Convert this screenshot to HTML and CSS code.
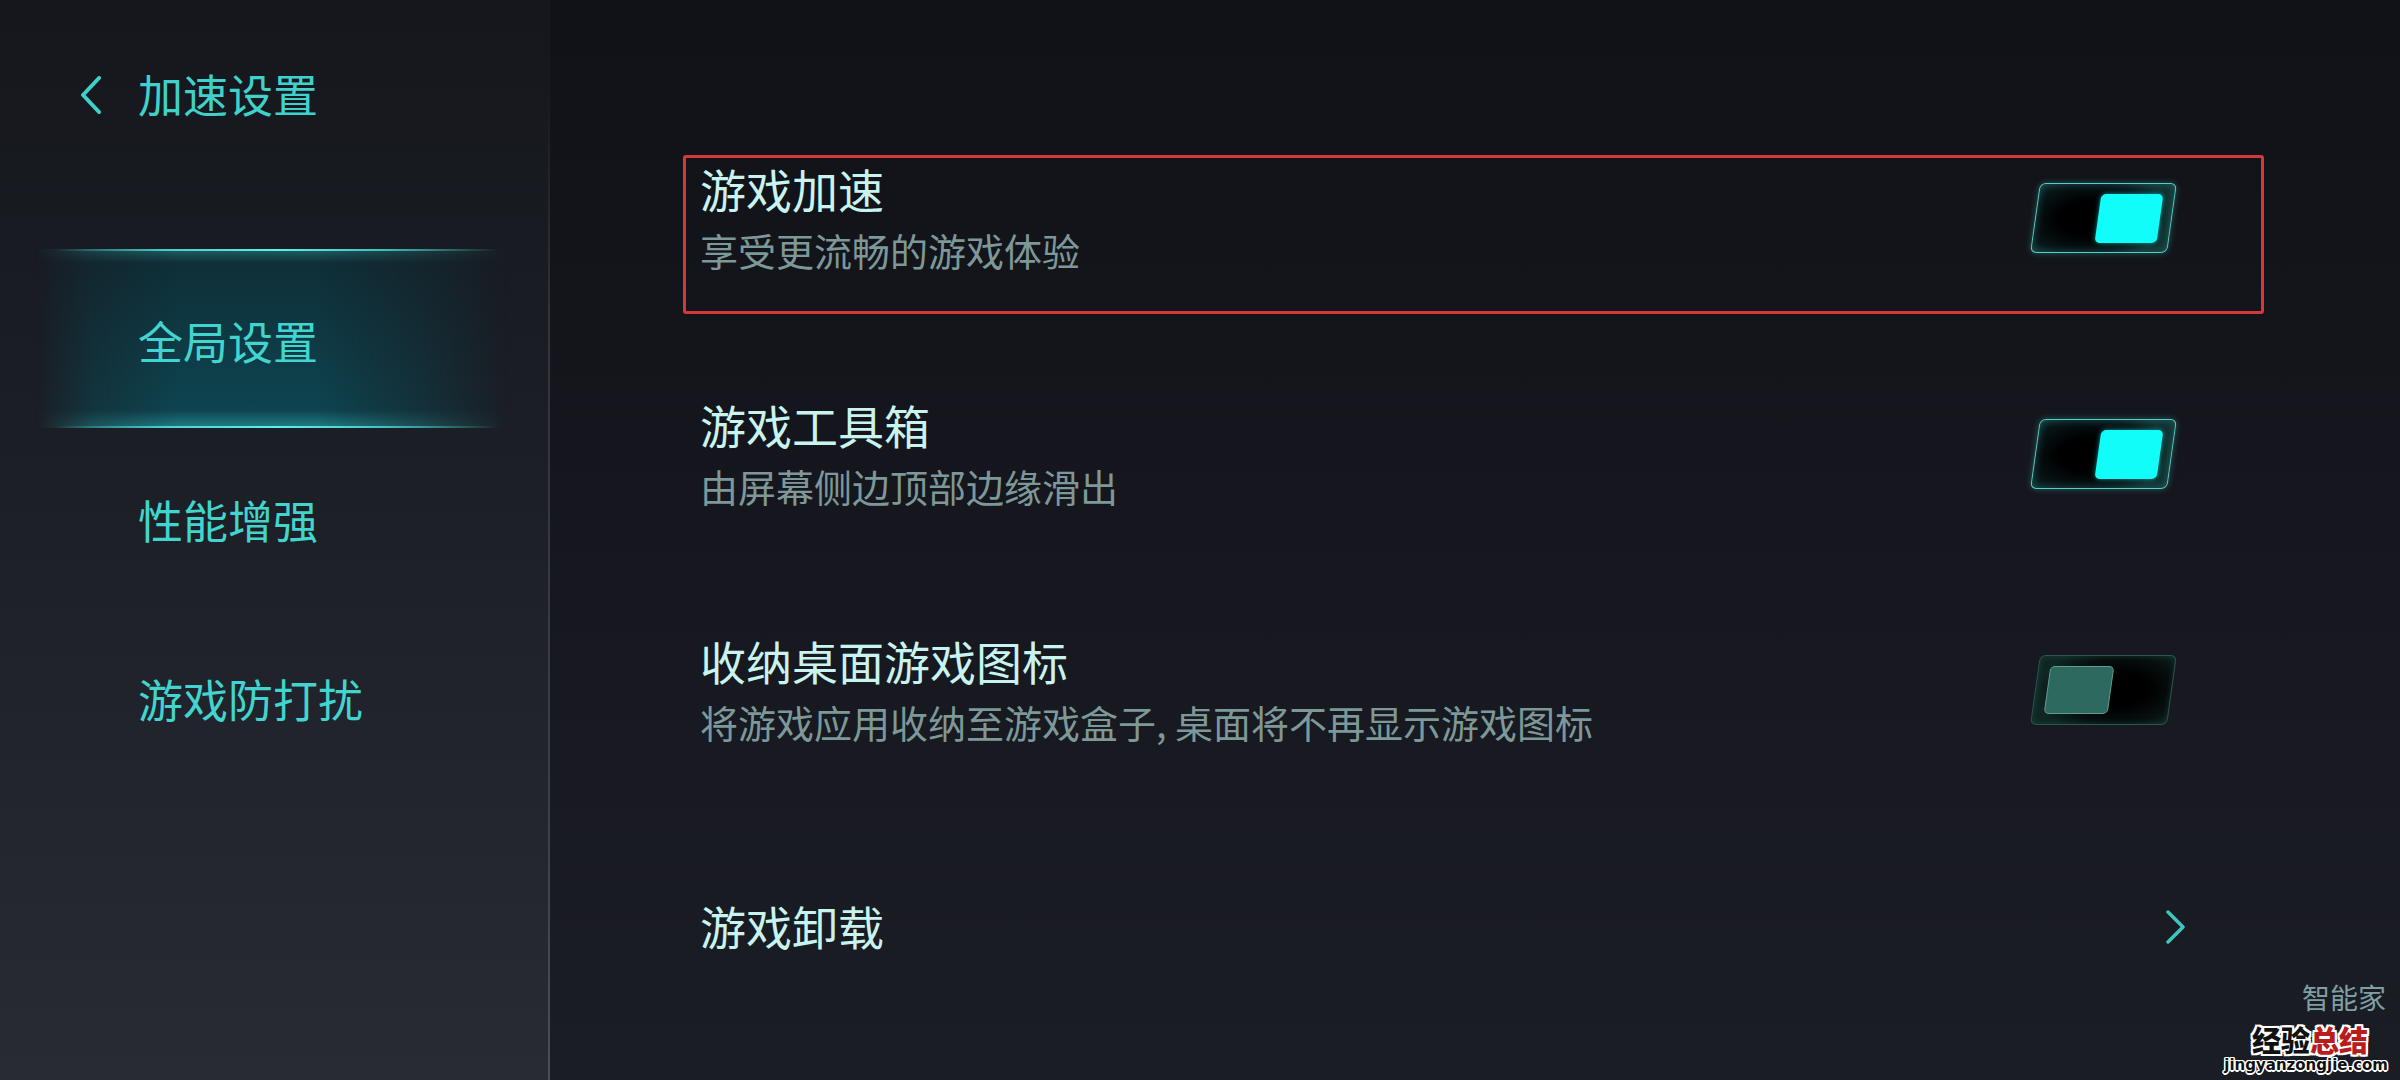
FILE: index.html
```html
<!DOCTYPE html>
<html lang="zh-CN">
<head>
<meta charset="utf-8">
<title>加速设置</title>
<link rel="stylesheet" href="styles.css">
</head>
<body>
<div class="app">
  <aside class="sidebar">
    <header class="side-header">
      <svg class="back" width="22" height="38" viewBox="0 0 22 38"><polyline points="19,2 3,19 19,36" fill="none" stroke="#3fd0c9" stroke-width="4" stroke-linecap="round" stroke-linejoin="round"/></svg>
      <span class="side-title">加速设置</span>
    </header>
    <nav class="nav">
      <div class="nav-item active"><span>全局设置</span></div>
      <div class="nav-item"><span>性能增强</span></div>
      <div class="nav-item"><span>游戏防打扰</span></div>
    </nav>
  </aside>
  <main class="main">
    <div class="row highlight">
      <div class="text">
        <div class="title">游戏加速</div>
        <div class="sub">享受更流畅的游戏体验</div>
      </div>
      <div class="toggle on"><div class="knob"></div></div>
    </div>
    <div class="row">
      <div class="text">
        <div class="title">游戏工具箱</div>
        <div class="sub">由屏幕侧边顶部边缘滑出</div>
      </div>
      <div class="toggle on"><div class="knob"></div></div>
    </div>
    <div class="row">
      <div class="text">
        <div class="title">收纳桌面游戏图标</div>
        <div class="sub">将游戏应用收纳至游戏盒子, 桌面将不再显示游戏图标</div>
      </div>
      <div class="toggle off"><div class="knob"></div></div>
    </div>
    <div class="row link">
      <div class="text">
        <div class="title">游戏卸载</div>
      </div>
      <svg class="chev" width="22" height="34" viewBox="0 0 22 34"><polyline points="3,2 18,17 3,32" fill="none" stroke="#3cc6bf" stroke-width="3.5" stroke-linecap="round" stroke-linejoin="round"/></svg>
    </div>
  </main>
  <div class="watermark">
    <span class="wm-brand">智能家</span>
    <span class="wm-main">经验<em>总结</em></span>
    <span class="wm-url">jingyanzongjie.com</span>
  </div>
</div>
</body>
</html>
```

FILE: styles.css
```css
* { box-sizing: border-box; margin: 0; padding: 0; }
html, body { width: 2400px; height: 1080px; overflow: hidden; }
body {
  font-family: "Noto Sans CJK SC", "Noto Sans", sans-serif;
  background: #15161c;
}
.app {
  position: relative;
  display: flex;
  width: 2400px;
  height: 1080px;
}

/* Sidebar */
.sidebar {
  width: 550px;
  flex: none;
  background: linear-gradient(to bottom, #15171d 0%, #1c1f26 45%, #282b34 100%);
  border-right: 2px solid;
  border-image: linear-gradient(to bottom, rgba(60,64,74,0) 0%, rgba(60,64,74,0) 8%, #2f333c 30%, #3b3f49 75%, #4a4e58 100%) 1;
}
.side-header {
  height: 188px;
  display: flex;
  align-items: center;
  padding-left: 80px;
  gap: 36px;
}
.back { display: block; margin-top: 2px; }
.side-title {
  font-size: 45px;
  line-height: 60px;
  color: #3fd2cc;
}
.nav { padding-top: 61px; }
.nav-item {
  position: relative;
  height: 179px;
  margin-left: 36px;
  width: 471px;
  display: flex;
  align-items: center;
  padding-top: 4px;
  padding-left: 102px;
  font-size: 45px;
  line-height: 60px;
  color: #42d4ce;
}
.nav-item span { position: relative; z-index: 1; }
.nav-item.active::before {
  content: "";
  position: absolute;
  inset: 0;
  background:
    linear-gradient(to bottom, rgba(70,230,225,0.28) 0, rgba(70,230,225,0) 14px),
    linear-gradient(to top, rgba(70,230,225,0.35) 0, rgba(70,230,225,0) 18px),
    linear-gradient(to bottom, #0f2d35 0%, #0e3b46 55%, #0d4752 100%);
  -webkit-mask-image: linear-gradient(to right, transparent 0%, rgba(0,0,0,0.6) 12%, #000 30%, #000 60%, rgba(0,0,0,0.5) 82%, transparent 100%);
  mask-image: linear-gradient(to right, transparent 0%, rgba(0,0,0,0.6) 12%, #000 30%, #000 60%, rgba(0,0,0,0.5) 82%, transparent 100%);
}
.nav-item.active::after {
  content: "";
  position: absolute;
  left: 20px;
  right: 10px;
  top: 0;
  bottom: 0;
  background:
    linear-gradient(to right, rgba(80,235,230,0) 0%, rgba(80,235,230,0.8) 25%, #5ef0ea 50%, rgba(80,235,230,0.7) 75%, rgba(80,235,230,0) 100%) top / 100% 2px no-repeat,
    linear-gradient(to right, rgba(80,235,230,0) 0%, rgba(80,235,230,0.8) 25%, #5ef0ea 50%, rgba(80,235,230,0.7) 75%, rgba(80,235,230,0) 100%) bottom / 100% 2px no-repeat;
}

/* Main */
.main {
  flex: 1;
  background: linear-gradient(to bottom, #111217 0%, #15161d 40%, #1b1d25 100%);
  padding: 155px 136px 0 133px;
  display: flex;
  flex-direction: column;
  gap: 77px;
}
.row {
  display: flex;
  justify-content: space-between;
  align-items: flex-start;
  border: 3px solid transparent;
  border-radius: 3px;
  padding: 0 89px 29px 14px;
}
.row.highlight { border-color: #d63838; }
.title {
  font-size: 46px;
  line-height: 60px;
  color: #c8f3ef;
}
.sub {
  font-size: 38px;
  line-height: 64px;
  color: #7d9898;
}
.row.link {
  margin-top: 29px;
  align-items: center;
  padding-right: 74px;
  padding-bottom: 0;
}
.chev { display: block; margin-top: 3px; }

/* Toggle */
.toggle {
  margin-top: 25px;
  width: 137px;
  height: 70px;
  transform: skewX(-8deg);
  border-radius: 6px;
  display: flex;
  align-items: center;
  padding: 0 11px;
}
.toggle.on {
  justify-content: flex-end;
  border: 1.5px solid #52cfc6;
  background: radial-gradient(ellipse 60% 70% at 38% 50%, #000000 35%, #081518 75%, #11302f 100%);
  box-shadow: 0 0 6px rgba(70,220,210,0.35), inset 0 0 8px rgba(70,210,200,0.3);
}
.toggle.off {
  justify-content: flex-start;
  border: 1.5px solid #2a5550;
  background: radial-gradient(ellipse 60% 70% at 62% 50%, #000000 35%, #07100f 70%, #0f2623 100%);
  box-shadow: inset 0 0 6px rgba(50,140,130,0.25);
}
.knob {
  width: 62px;
  height: 49px;
  border-radius: 5px;
}
.toggle.on .knob {
  background: #10fdf9;
  box-shadow: 0 0 5px rgba(20,255,250,0.55);
}
.toggle.off .knob {
  width: 64px;
  height: 48px;
  background: #2e695f;
  border: 1.5px solid #5f9d93;
}

/* Watermark overlay */
.watermark {
  position: absolute;
  right: 10px;
  bottom: 4px;
  width: 150px;
  height: 80px;
}
.wm-brand {
  position: absolute;
  right: 4px;
  top: -14px;
  font-size: 28px;
  line-height: 30px;
  color: #7f9fa3;
}
.wm-main {
  position: absolute;
  right: 22px;
  top: 28px;
  font-size: 29px;
  line-height: 30px;
  font-weight: 900;
  color: #111;
  text-shadow: -2px 0 #fff, 2px 0 #fff, 0 -2px #fff, 0 2px #fff, -2px -2px #fff, 2px 2px #fff, -2px 2px #fff, 2px -2px #fff;
}
.wm-main em { font-style: normal; color: #b81c1c; }
.wm-url {
  position: absolute;
  right: 2px;
  bottom: 2px;
  font-family: "DejaVu Sans", sans-serif;
  font-size: 15px;
  line-height: 18px;
  font-weight: 700;
  color: #111;
  text-shadow: -1.5px 0 #fff, 1.5px 0 #fff, 0 -1.5px #fff, 0 1.5px #fff, -1px -1px #fff, 1px 1px #fff, -1px 1px #fff, 1px -1px #fff;
}
```
